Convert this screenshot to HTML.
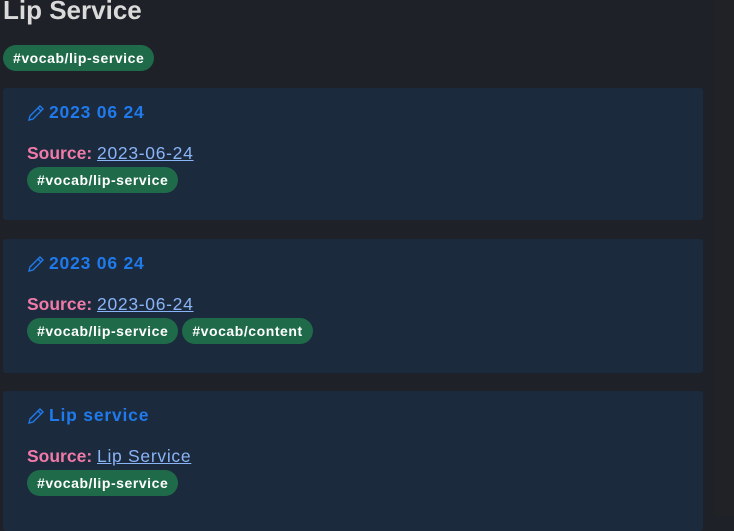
<!DOCTYPE html><html><head><style>
body{margin:0;width:734px;height:517px;background:#1e2127;font-family:"Liberation Sans",sans-serif;overflow:hidden;position:relative}
.t{position:absolute;left:3px;top:-5px;font-size:26px;font-weight:bold;color:#dadada}
.tag{display:inline-block;background:#1f6b49;color:#fff;font-size:14px;font-weight:bold;height:26px;line-height:26px;padding:0 10px;border-radius:13px;margin-right:4px;letter-spacing:0.55px}
.card{position:absolute;left:3px;width:700px;background:#1c2a3d;border-radius:3px}
.h{position:absolute;left:24px;top:14px;color:#1f7aec;font-size:17.5px;font-weight:bold;display:flex;align-items:center;letter-spacing:0.8px}
.h svg{margin-right:4px}
.s{position:absolute;left:24px;top:55px;font-size:17.5px;color:#f07aa8;font-weight:bold;letter-spacing:0}
.s a{color:#8ab4f8;font-weight:normal;text-decoration:underline;letter-spacing:0.7px}
.tg{position:absolute;left:24px;top:79px}
</style></head><body>
<div style="position:absolute;left:714px;top:0;width:20px;height:517px;background:#202226"></div>
<div class="t">Lip Service</div>
<div style="position:absolute;left:3px;top:45px"><span class="tag">#vocab/lip-service</span></div>
<div class="card" style="top:88px;height:132px">
<div class="h"><svg width="18" height="18" viewBox="0 0 18 18" fill="none" stroke="#1f7aec" stroke-width="1.4"><path d="M2 16l1-4L13 2l3 3L6 15z M11 4l3 3"/></svg>2023 06 24</div>
<div class="s">Source: <a>2023-06-24</a></div>
<div class="tg"><span class="tag">#vocab/lip-service</span></div></div>
<div class="card" style="top:239px;height:134px">
<div class="h"><svg width="18" height="18" viewBox="0 0 18 18" fill="none" stroke="#1f7aec" stroke-width="1.4"><path d="M2 16l1-4L13 2l3 3L6 15z M11 4l3 3"/></svg>2023 06 24</div>
<div class="s">Source: <a>2023-06-24</a></div>
<div class="tg"><span class="tag">#vocab/lip-service</span><span class="tag">#vocab/content</span></div></div>
<div class="card" style="top:391px;height:140px">
<div class="h"><svg width="18" height="18" viewBox="0 0 18 18" fill="none" stroke="#1f7aec" stroke-width="1.4"><path d="M2 16l1-4L13 2l3 3L6 15z M11 4l3 3"/></svg>Lip service</div>
<div class="s">Source: <a>Lip Service</a></div>
<div class="tg"><span class="tag">#vocab/lip-service</span></div></div>
</body></html>
